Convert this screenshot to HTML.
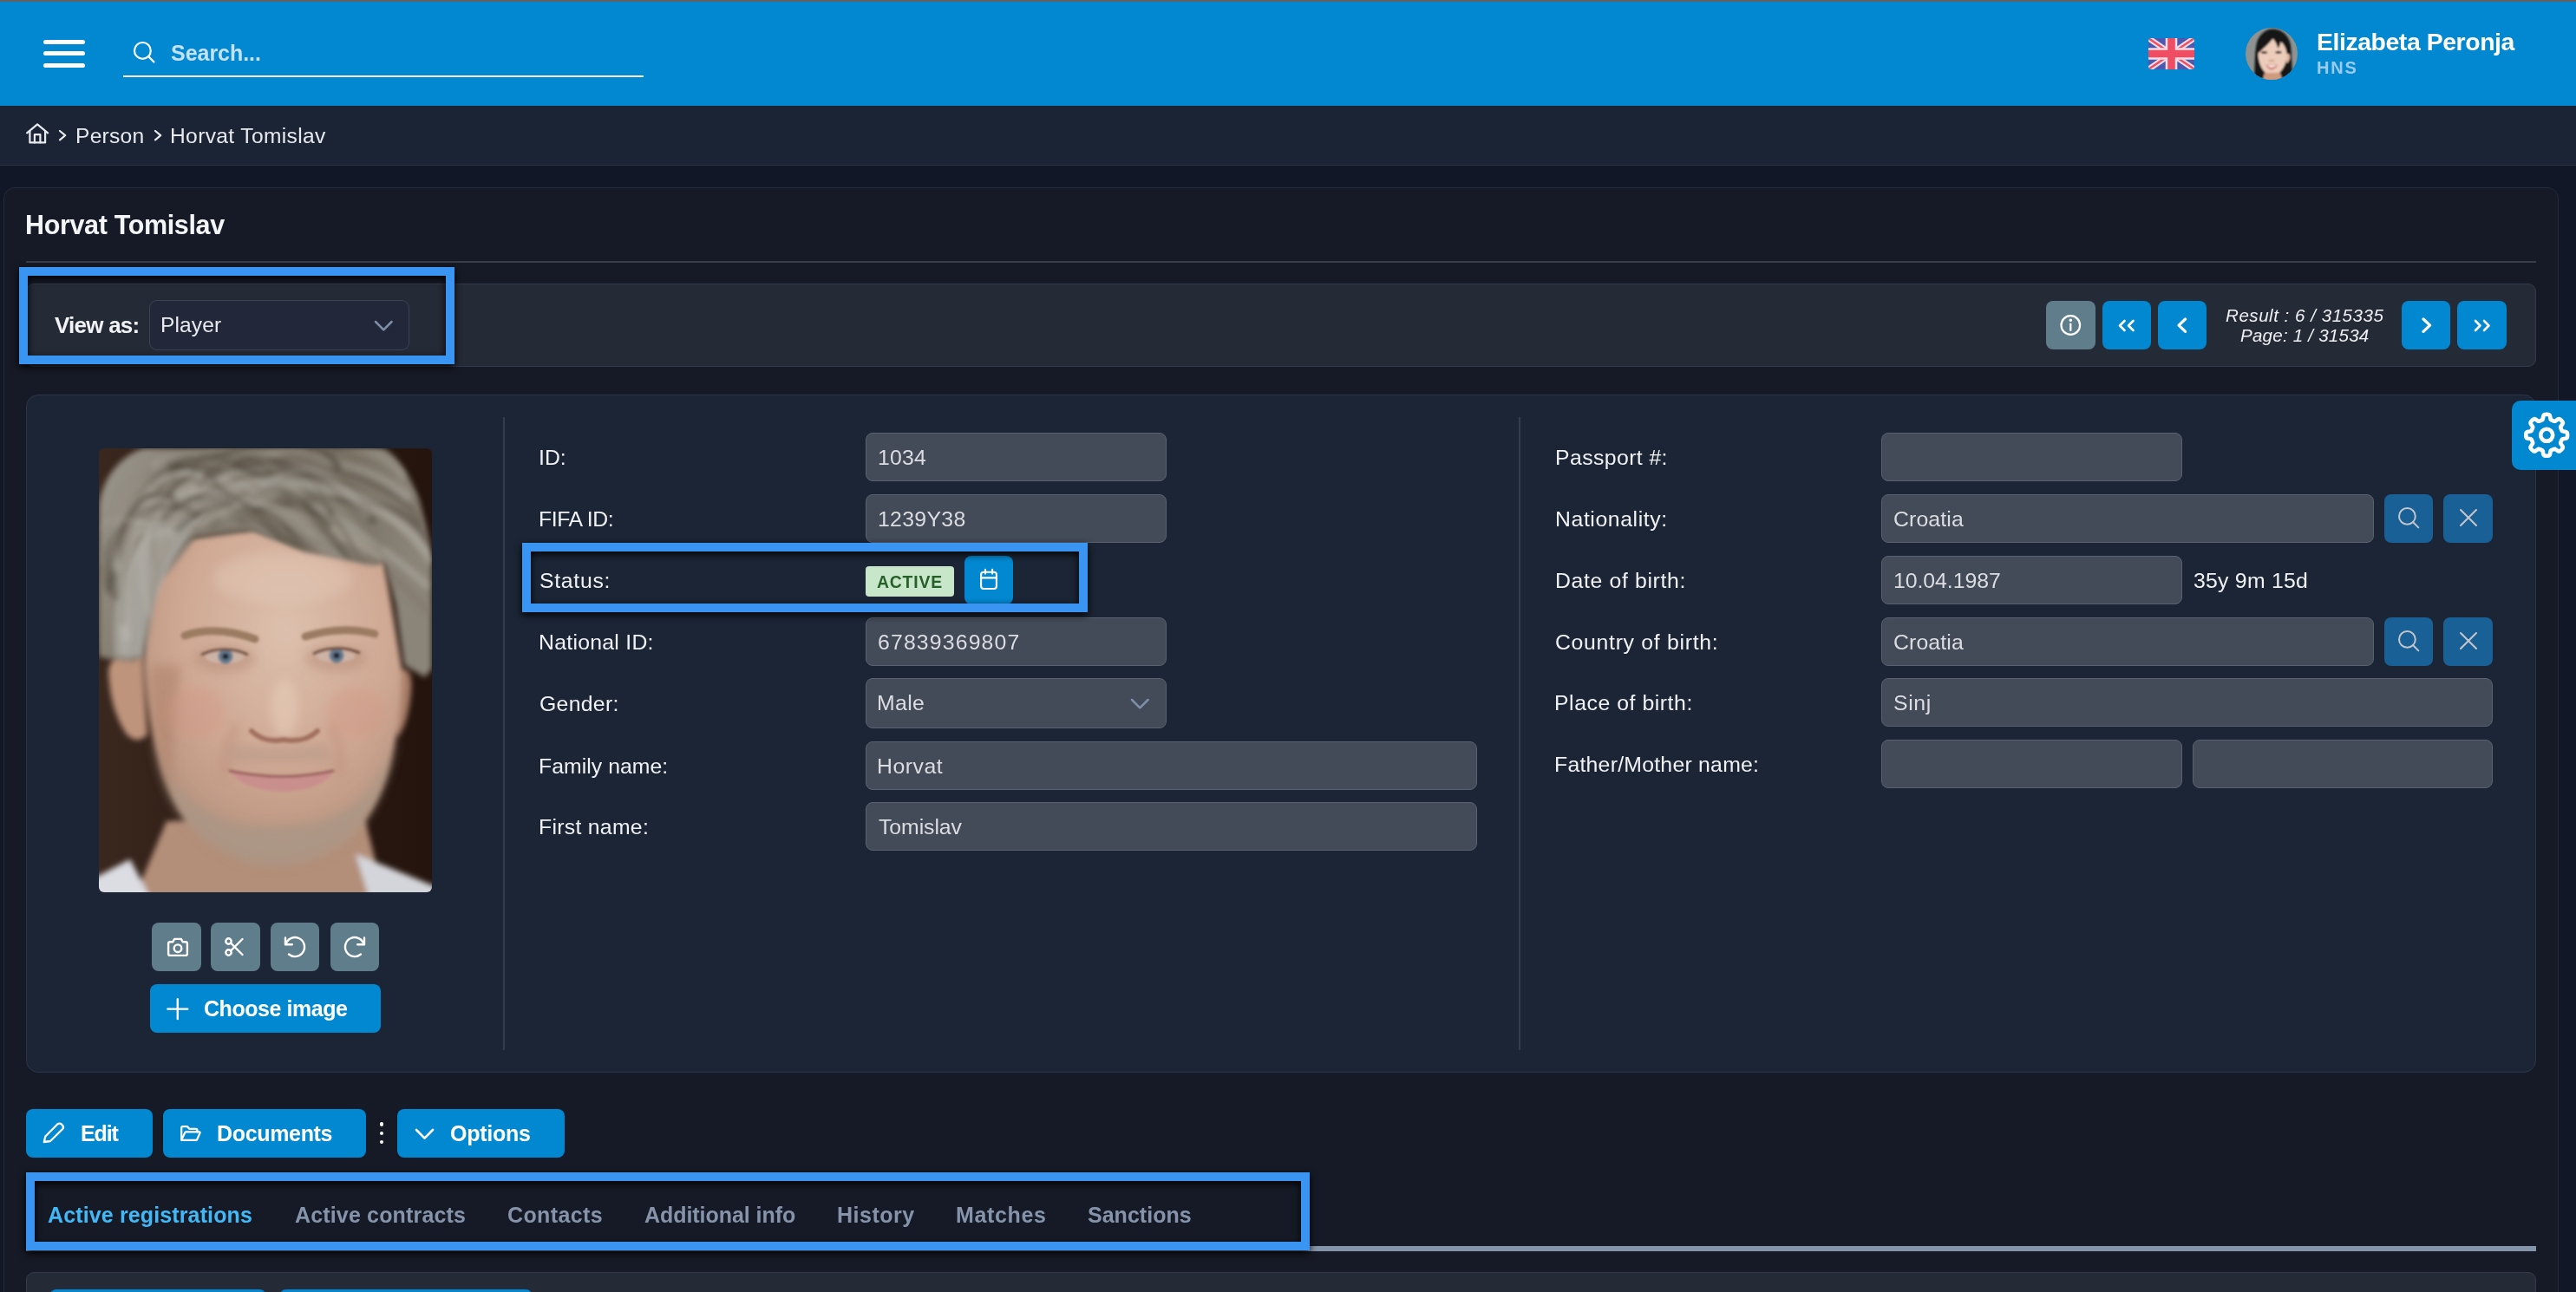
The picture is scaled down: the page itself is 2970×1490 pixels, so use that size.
<!DOCTYPE html>
<html><head><meta charset="utf-8"><title>Horvat Tomislav</title>
<style>
html,body{margin:0;padding:0;background:#111726;}
body{width:2970px;height:1490px;overflow:hidden;position:relative;font-family:"Liberation Sans", sans-serif;}
.b{position:absolute;box-sizing:border-box;}
.t{position:absolute;white-space:pre;font-family:"Liberation Sans", sans-serif;will-change:transform;}
</style></head><body>
<div class="b" style="left:0px;top:0px;width:2970px;height:2px;background:linear-gradient(#5f6165,#675f5e);"></div>
<div class="b" style="left:0px;top:2px;width:2970px;height:120px;background:#0288d1;"></div>
<div class="b" style="left:50px;top:45.5px;width:48px;height:5.200000000000003px;background:#fff;border-radius:2.6px;"></div>
<div class="b" style="left:50px;top:59.3px;width:48px;height:5.200000000000003px;background:#fff;border-radius:2.6px;"></div>
<div class="b" style="left:50px;top:73.1px;width:48px;height:5.200000000000003px;background:#fff;border-radius:2.6px;"></div>
<svg class="b" style="left:151.0px;top:44.6px" width="30.400000000000006" height="30.4" viewBox="151.0 44.6 30.400000000000006 30.4" fill="none" stroke="#fff" stroke-width="2.2" stroke-linecap="round"><circle cx="164.4" cy="58.0" r="9.4"/><path d="M171.05 64.65 L177.4 71.0"/></svg>
<div class="b" style="left:142px;top:86.8px;width:600px;height:2.0px;background:#fff;"></div>
<svg class="b" style="left:2476.5px;top:44px;border-radius:4px" width="53" height="36" viewBox="0 0 53 36">
<rect width="53" height="36" fill="#4b5ab0"/>
<path d="M0 0 L53 36 M53 0 L0 36" stroke="#efdbe4" stroke-width="6.6"/>
<path d="M0 0 L53 36 M53 0 L0 36" stroke="#ee4d63" stroke-width="2.4"/>
<path d="M26.5 0 V36 M0 18 H53" stroke="#f3dde4" stroke-width="13.6"/>
<path d="M26.5 0 V36 M0 18 H53" stroke="#ee4d63" stroke-width="8.6"/>
</svg>
<svg class="b" style="left:2589px;top:32px" width="60" height="60" viewBox="0 0 60 60">
<defs><clipPath id="avc"><circle cx="30" cy="30" r="30"/></clipPath><filter id="avb"><feGaussianBlur stdDeviation="0.8"/></filter></defs>
<g clip-path="url(#avc)"><rect width="60" height="60" fill="#8e9290"/>
<g filter="url(#avb)">
<path d="M10 62 C11 45 10 30 13 17 C17 5 26 1 32 1.5 C42 2 50 9 52 20 C53.5 32 53 45 55 62 Z" fill="#161515"/>
<path d="M47 30 Q51.5 29 51 35 Q50 40 47 41 Z" fill="#e2b9a4"/>
<path d="M14.5 30 C14 22 18 13 30 12.5 C42 13 47.5 22 47.5 31 C47.5 40 44 48 38 52.5 C34 55.5 28 55.5 24 52.5 C18 48 15 40 14.5 30 Z" fill="#ecccba"/>
<path d="M22 52 L40 52 L43 62 L19 62 Z" fill="#d09a7e"/>
<path d="M13 31 C13 18 20 9 31 9 C43 9 50 18 50 30 C47 25 44 19 41 14 C40 19 39 22 37.5 24 C36 19 34 15 31.5 12.5 C28 17 22 23 13 31 Z" fill="#161515"/>
<ellipse cx="21.5" cy="28.4" rx="3.6" ry="1.5" fill="#3a2a26"/>
<ellipse cx="38" cy="28.2" rx="3.6" ry="1.5" fill="#3a2a26"/>
<path d="M27 37.5 Q30 39 33 37.5" stroke="#c9957f" stroke-width="1.4" fill="none"/>
<path d="M23.3 42.8 Q30 41.6 37 42.8 Q35 48.2 30 48.4 Q25.5 48.2 23.3 42.8 Z" fill="#d47f7c"/>
<path d="M24.8 43.3 Q30 42.6 35.6 43.3 Q33.5 45.6 30 45.7 Q27 45.6 24.8 43.3 Z" fill="#f6ece6"/>
</g></g></svg>
<div class="b" style="left:0px;top:122px;width:2970px;height:69px;background:#1b2434;border:none;border-bottom:1.5px solid #2b3343;"></div>
<svg class="b" style="left:28px;top:141px" width="30" height="27" viewBox="28 141 30 27" fill="none" stroke="#e8eaed" stroke-width="2.2" stroke-linecap="round" stroke-linejoin="round">
<path d="M31.1 153.3 L43.1 143.4 L55.1 153.3"/><path d="M34.4 151.2 V164.4 H52.1 V151.2"/><path d="M39.9 164.4 V155.2 H46.4 V164.4"/></svg>
<svg class="b" style="left:66px;top:147.6px" width="12.200000000000003" height="16.400000000000006" viewBox="-3 -3 12.200000000000003 16.400000000000006" fill="none" stroke="#e8eaed" stroke-width="2.2" stroke-linecap="round" stroke-linejoin="round"><path d="M0 0 L6.200000000000003 5.200000000000003 L0 10.400000000000006"/></svg>
<svg class="b" style="left:175.5px;top:147.6px" width="12.199999999999989" height="16.400000000000006" viewBox="-3 -3 12.199999999999989 16.400000000000006" fill="none" stroke="#e8eaed" stroke-width="2.2" stroke-linecap="round" stroke-linejoin="round"><path d="M0 0 L6.199999999999989 5.200000000000003 L0 10.400000000000006"/></svg>
<div class="b" style="left:4px;top:215.5px;width:2945.5px;height:1384.5px;background:#161a26;border:1.3px solid #262b39;border-radius:13px;"></div>
<div class="b" style="left:30px;top:301.2px;width:2893.5px;height:1.8000000000000114px;background:#383d4a;"></div>
<div class="b" style="left:30px;top:327px;width:2894px;height:95.5px;background:#252a37;border:1.3px solid #343a49;border-radius:9px;"></div>
<div class="b" style="left:172px;top:346px;width:300px;height:58px;background:#222839;border:1.3px solid #3b4253;border-radius:9px;"></div>
<svg class="b" style="left:430.2px;top:367.90000000000003px" width="24.6" height="15.4" viewBox="-3 -3 24.6 15.4" fill="none" stroke="#7d8fa8" stroke-width="2.5" stroke-linecap="round" stroke-linejoin="round"><path d="M0 0 L9.3 9.4 L18.6 0"/></svg>
<div class="b" style="left:2359px;top:347px;width:57px;height:56px;background:#607d8b;border-radius:8px;"></div>
<svg class="b" style="left:2371px;top:359px" width="32" height="32" viewBox="0 0 32 32" fill="none" stroke="#fff" stroke-width="2.2" stroke-linecap="round"><circle cx="16.3" cy="16" r="10.8"/><path d="M16.3 14.5 V22"/><circle cx="16.3" cy="10.2" r="0.7" fill="#fff"/></svg>
<div class="b" style="left:2423.7px;top:347px;width:56.30000000000018px;height:56px;background:#0288d1;border-radius:8px;"></div>
<div class="b" style="left:2488px;top:347px;width:56.30000000000018px;height:56px;background:#0288d1;border-radius:8px;"></div>
<div class="b" style="left:2769px;top:347px;width:56.30000000000018px;height:56px;background:#0288d1;border-radius:8px;"></div>
<div class="b" style="left:2833.3px;top:347px;width:56.30000000000018px;height:56px;background:#0288d1;border-radius:8px;"></div>
<svg class="b" style="left:2441px;top:366.5px" width="11.5" height="17.0" viewBox="-3 -3 11.5 17.0" fill="none" stroke="#fff" stroke-width="2.6" stroke-linecap="round" stroke-linejoin="round"><path d="M5.5 0 L0 5.5 L5.5 11.0"/></svg>
<svg class="b" style="left:2450.5px;top:366.5px" width="11.5" height="17.0" viewBox="-3 -3 11.5 17.0" fill="none" stroke="#fff" stroke-width="2.6" stroke-linecap="round" stroke-linejoin="round"><path d="M5.5 0 L0 5.5 L5.5 11.0"/></svg>
<svg class="b" style="left:2509px;top:365px" width="13.599999999999909" height="20.399999999999977" viewBox="-3 -3 13.599999999999909 20.399999999999977" fill="none" stroke="#fff" stroke-width="3.2" stroke-linecap="round" stroke-linejoin="round"><path d="M7.599999999999909 0 L0 7.199999999999989 L7.599999999999909 14.399999999999977"/></svg>
<svg class="b" style="left:2791px;top:365px" width="13.599999999999909" height="20.399999999999977" viewBox="-3 -3 13.599999999999909 20.399999999999977" fill="none" stroke="#fff" stroke-width="3.2" stroke-linecap="round" stroke-linejoin="round"><path d="M0 0 L7.599999999999909 7.199999999999989 L0 14.399999999999977"/></svg>
<svg class="b" style="left:2851px;top:366.5px" width="11.5" height="17.0" viewBox="-3 -3 11.5 17.0" fill="none" stroke="#fff" stroke-width="2.6" stroke-linecap="round" stroke-linejoin="round"><path d="M0 0 L5.5 5.5 L0 11.0"/></svg>
<svg class="b" style="left:2860.5px;top:366.5px" width="11.5" height="17.0" viewBox="-3 -3 11.5 17.0" fill="none" stroke="#fff" stroke-width="2.6" stroke-linecap="round" stroke-linejoin="round"><path d="M0 0 L5.5 5.5 L0 11.0"/></svg>
<div class="b" style="left:30px;top:455px;width:2894px;height:781.5px;background:#1b2535;border:1.3px solid #2c3648;border-radius:14px;"></div>
<svg class="b" style="left:114px;top:517px;border-radius:6px" width="384" height="512" viewBox="0 0 384 512">
<defs>
<filter id="bl6" x="-20%" y="-20%" width="140%" height="140%"><feGaussianBlur stdDeviation="6"/></filter>
<filter id="bl3" x="-20%" y="-20%" width="140%" height="140%"><feGaussianBlur stdDeviation="3"/></filter>
<filter id="bl15" x="-20%" y="-20%" width="140%" height="140%"><feGaussianBlur stdDeviation="1.5"/></filter>
<linearGradient id="bgp" x1="0" y1="0" x2="1" y2="0"><stop offset="0" stop-color="#3a271e"/><stop offset="0.5" stop-color="#2c1b13"/><stop offset="1" stop-color="#24140d"/></linearGradient>
<radialGradient id="skin" cx="0.55" cy="0.3" r="0.75"><stop offset="0" stop-color="#dcc0ad"/><stop offset="0.55" stop-color="#cfa893"/><stop offset="1" stop-color="#b08c78"/></radialGradient>
<linearGradient id="hairg" x1="0" y1="0" x2="1" y2="0.3"><stop offset="0" stop-color="#9c988f"/><stop offset="0.35" stop-color="#81796d"/><stop offset="0.7" stop-color="#776f62"/><stop offset="1" stop-color="#8b8478"/></linearGradient>
<mask id="hm"><g filter="url(#bl3)"><path d="M0 67 C4 30 30 6 52 0 L329 0 C362 20 378 80 384 131 L384 254 L376 264 L352 250 L342 180 L329 131 L317 135 L238 119 L178 95 L111 103 L67 160 L52 240 L40 246 L12 243 L0 240 Z" fill="#fff"/></g></mask></defs>
<rect width="384" height="512" fill="url(#bgp)"/>
<g filter="url(#bl3)">
<path d="M78 430 L40 520 L330 520 L306 425 Z" fill="#b38e78"/>
<path d="M-10 498 L36 474 L60 520 L-10 520 Z" fill="#dcdde2"/>
<path d="M296 468 L326 480 L394 508 L394 520 L312 520 Z" fill="#d4d5da"/>
<path d="M50 238 Q20 225 11 255 Q12 300 32 330 Q45 342 56 330 Z" fill="#bf947d"/>
<path d="M345 256 Q362 248 360 280 Q356 320 344 334 Z" fill="#a97e68"/>
<path d="M52 238 C50 160 80 110 111 103 L178 93 L238 115 L329 131 L349 250 C349 320 338 385 306 430 C282 466 235 484 202 482 C165 482 122 462 100 428 C70 385 56 320 52 238 Z" fill="url(#skin)"/>
</g>
<g filter="url(#bl6)">
<path d="M62 330 Q75 410 110 440 Q150 480 200 482 Q250 482 290 448 Q330 410 344 330 Q320 400 280 420 Q250 436 200 436 Q150 436 118 415 Q80 390 62 330 Z" fill="#a99686" opacity="0.8"/>
<path d="M150 340 Q200 350 262 340 L270 362 L150 362 Z" fill="#b89a8a" opacity="0.6"/>
<path d="M60 250 Q55 330 85 400 Q85 320 95 250 Z" fill="#b0846d" opacity="0.6"/>
</g>
<g filter="url(#bl3)">
<path d="M0 67 C4 30 30 6 52 0 L329 0 C362 20 378 80 384 131 L384 254 L376 264 L352 250 L342 180 L329 131 L317 135 L238 119 L178 95 L111 103 L67 160 L52 240 L40 246 L12 243 L0 240 Z" fill="url(#hairg)"/>
<path d="M30 150 Q60 60 150 50 Q100 90 70 160 Q55 200 50 240 L20 240 Q15 190 30 150 Z" fill="#aeaca6" opacity="0.8"/>
<path d="M120 20 Q220 -5 320 60 Q260 30 200 40 Q150 45 110 80 Z" fill="#5a5146" opacity="0.75"/>
<path d="M200 70 Q280 70 340 140 Q300 110 240 100 Z" fill="#a39b8d" opacity="0.8"/>
</g>
<g mask="url(#hm)"><g filter="url(#bl3)" fill="none" stroke-linecap="round"><path d="M101 60 C161 10 353 56 384 127" stroke="#a29d93" stroke-width="5.7" opacity="0.38"/><path d="M68 80 C157 12 291 -47 351 30" stroke="#a29d93" stroke-width="9.4" opacity="0.51"/><path d="M66 18 C142 -18 322 106 378 158" stroke="#b8b5ad" stroke-width="9.5" opacity="0.42"/><path d="M120 52 C209 -10 228 191 290 249" stroke="#b8b5ad" stroke-width="8.6" opacity="0.31"/><path d="M111 24 C145 3 205 34 266 87" stroke="#574e43" stroke-width="8.3" opacity="0.55"/><path d="M96 21 C142 -4 301 101 341 199" stroke="#7d7568" stroke-width="5.9" opacity="0.48"/><path d="M61 52 C102 7 241 91 321 177" stroke="#979084" stroke-width="9.5" opacity="0.33"/><path d="M98 32 C176 -3 216 191 289 243" stroke="#979084" stroke-width="12.0" opacity="0.45"/><path d="M112 18 C143 -32 201 58 271 122" stroke="#7d7568" stroke-width="5.6" opacity="0.45"/><path d="M82 63 C169 19 249 32 304 124" stroke="#a29d93" stroke-width="9.4" opacity="0.38"/><path d="M81 64 C148 16 294 -7 355 56" stroke="#c2bfb8" stroke-width="9.2" opacity="0.41"/><path d="M69 18 C142 -15 320 -1 390 75" stroke="#8a8377" stroke-width="8.6" opacity="0.53"/><path d="M148 25 C215 1 287 75 319 170" stroke="#574e43" stroke-width="5.5" opacity="0.40"/><path d="M82 19 C171 -6 263 75 291 142" stroke="#4a4238" stroke-width="9.6" opacity="0.47"/><path d="M113 26 C197 -29 177 -17 255 24" stroke="#7d7568" stroke-width="8.4" opacity="0.48"/><path d="M89 95 C163 30 197 63 261 146" stroke="#4a4238" stroke-width="7.5" opacity="0.47"/><path d="M141 85 C223 36 253 139 310 202" stroke="#574e43" stroke-width="9.3" opacity="0.32"/><path d="M118 94 C171 38 323 121 378 187" stroke="#7d7568" stroke-width="8.6" opacity="0.43"/><path d="M88 22 C125 -37 194 171 253 240" stroke="#574e43" stroke-width="7.6" opacity="0.34"/><path d="M115 56 C201 12 325 34 359 99" stroke="#8a8377" stroke-width="6.4" opacity="0.41"/><path d="M133 88 C198 52 349 39 378 108" stroke="#574e43" stroke-width="10.0" opacity="0.54"/><path d="M85 29 C128 -12 258 14 315 83" stroke="#4a4238" stroke-width="10.0" opacity="0.51"/><path d="M116 41 C183 -13 333 23 370 84" stroke="#574e43" stroke-width="9.5" opacity="0.40"/><path d="M77 77 C155 7 262 153 289 199" stroke="#4a4238" stroke-width="11.7" opacity="0.47"/><path d="M78 53 C136 -3 245 -34 276 22" stroke="#4a4238" stroke-width="8.8" opacity="0.54"/><path d="M105 95 C177 64 228 122 273 215" stroke="#979084" stroke-width="5.9" opacity="0.41"/><path d="M116 88 C199 28 228 83 305 151" stroke="#b8b5ad" stroke-width="5.7" opacity="0.52"/><path d="M132 89 C185 65 229 -23 268 76" stroke="#4a4238" stroke-width="6.8" opacity="0.48"/><path d="M61 55 C117 22 180 46 255 99" stroke="#7d7568" stroke-width="8.0" opacity="0.31"/><path d="M108 70 C198 5 332 48 383 128" stroke="#c2bfb8" stroke-width="11.6" opacity="0.42"/><path d="M145 22 C193 -35 224 70 282 141" stroke="#8a8377" stroke-width="7.2" opacity="0.40"/><path d="M136 87 C224 41 226 164 280 216" stroke="#7d7568" stroke-width="8.5" opacity="0.45"/><path d="M62 93 C141 44 275 31 325 112" stroke="#7d7568" stroke-width="11.5" opacity="0.41"/><path d="M143 79 C202 42 235 -19 309 77" stroke="#c2bfb8" stroke-width="8.7" opacity="0.33"/><path d="M98 17 C186 -4 258 141 288 181" stroke="#8a8377" stroke-width="7.3" opacity="0.39"/><path d="M116 23 C176 -9 324 -24 356 48" stroke="#979084" stroke-width="5.2" opacity="0.46"/><path d="M134 64 C196 33 295 146 328 219" stroke="#a29d93" stroke-width="6.6" opacity="0.49"/><path d="M133 87 C218 56 216 -1 296 92" stroke="#a29d93" stroke-width="11.2" opacity="0.33"/><path d="M68 46 C131 -9 281 159 313 236" stroke="#574e43" stroke-width="5.7" opacity="0.44"/><path d="M92 81 C160 44 222 92 302 182" stroke="#7d7568" stroke-width="8.4" opacity="0.31"/><path d="M113 69 C86 66 58 135 63 183" stroke="#979084" stroke-width="10.6" opacity="0.32"/><path d="M64 96 C31 82 14 158 30 219" stroke="#c2bfb8" stroke-width="5.1" opacity="0.48"/><path d="M119 35 C83 29 24 150 29 216" stroke="#a29d93" stroke-width="6.9" opacity="0.32"/><path d="M119 90 C76 84 46 185 63 242" stroke="#979084" stroke-width="6.7" opacity="0.33"/><path d="M112 33 C79 17 54 76 65 137" stroke="#8a8377" stroke-width="7.4" opacity="0.48"/><path d="M65 47 C31 28 11 70 30 121" stroke="#979084" stroke-width="7.0" opacity="0.46"/><path d="M100 63 C54 42 1 161 24 250" stroke="#a29d93" stroke-width="5.7" opacity="0.33"/><path d="M77 55 C31 55 25 165 33 219" stroke="#c2bfb8" stroke-width="8.3" opacity="0.43"/><path d="M128 65 C75 63 52 125 70 203" stroke="#a29d93" stroke-width="7.3" opacity="0.53"/><path d="M87 98 C43 85 44 136 59 190" stroke="#b8b5ad" stroke-width="8.6" opacity="0.39"/><path d="M80 72 C31 64 37 105 37 157" stroke="#a29d93" stroke-width="8.8" opacity="0.40"/><path d="M108 24 C65 3 9 92 19 172" stroke="#4a4238" stroke-width="7.6" opacity="0.42"/><path d="M128 39 C79 25 5 161 34 242" stroke="#b8b5ad" stroke-width="5.3" opacity="0.40"/><path d="M68 89 C34 85 9 70 22 140" stroke="#b8b5ad" stroke-width="7.2" opacity="0.49"/><path d="M117 31 C78 16 8 71 17 137" stroke="#c2bfb8" stroke-width="6.6" opacity="0.45"/><path d="M111 76 C81 47 -6 84 9 156" stroke="#4a4238" stroke-width="10.3" opacity="0.31"/><path d="M64 42 C40 25 25 157 27 201" stroke="#8a8377" stroke-width="8.3" opacity="0.46"/><path d="M86 58 C36 33 9 119 11 165" stroke="#4a4238" stroke-width="7.7" opacity="0.49"/><path d="M87 32 C43 23 -16 147 7 229" stroke="#8a8377" stroke-width="7.6" opacity="0.39"/><path d="M67 90 C24 75 -20 76 1 131" stroke="#a29d93" stroke-width="5.5" opacity="0.35"/></g></g>
<g filter="url(#bl6)">
<ellipse cx="112" cy="305" rx="34" ry="30" fill="#d19585" opacity="0.35"/>
<ellipse cx="296" cy="305" rx="34" ry="30" fill="#d19585" opacity="0.35"/>
<ellipse cx="145" cy="243" rx="36" ry="16" fill="#b48873" opacity="0.45"/>
<ellipse cx="273" cy="242" rx="36" ry="16" fill="#b48873" opacity="0.45"/>
<ellipse cx="214" cy="300" rx="16" ry="34" fill="#e6cbb9" opacity="0.6"/>
<path d="M160 318 Q140 350 146 378" stroke="#b58672" stroke-width="7" fill="none" opacity="0.5"/>
<path d="M266 318 Q284 350 276 378" stroke="#b58672" stroke-width="7" fill="none" opacity="0.5"/>
<ellipse cx="212" cy="150" rx="80" ry="30" fill="#e2c8b6" opacity="0.5"/>
</g>
<g filter="url(#bl15)">
<path d="M99 216 Q135 204 180 220" stroke="#9b7b62" stroke-width="9" fill="none" stroke-linecap="round"/>
<path d="M238 217 Q280 204 318 214" stroke="#9b7b62" stroke-width="9" fill="none" stroke-linecap="round"/>
<ellipse cx="145" cy="241" rx="22" ry="7" fill="#cdb3a6"/>
<ellipse cx="273" cy="240" rx="22" ry="7" fill="#cdb3a6"/>
<circle cx="146" cy="240" r="8.5" fill="#62788e"/>
<circle cx="274" cy="239" r="8.5" fill="#62788e"/>
<circle cx="146" cy="240" r="3.6" fill="#23232a"/>
<circle cx="274" cy="239" r="3.6" fill="#23232a"/>
<path d="M118 238 Q145 226 172 238" stroke="#6d4e3f" stroke-width="3" fill="none"/>
<path d="M247 237 Q274 225 301 236" stroke="#6d4e3f" stroke-width="3" fill="none"/>
<path d="M176 326 Q190 340 213 336 Q238 340 252 326" stroke="#a1705f" stroke-width="6" fill="none" stroke-linecap="round"/>
<path d="M151 372 Q212 388 270 372 Q260 394 212 396 Q165 394 151 372 Z" fill="#c98f8c"/>
<path d="M151 372 Q212 385 270 372" stroke="#9a625d" stroke-width="3" fill="none" stroke-linecap="round"/>
</g>
</svg>
<div class="b" style="left:175px;top:1064px;width:56.599999999999994px;height:56px;background:#607d8b;border-radius:8px;"></div>
<div class="b" style="left:243.2px;top:1064px;width:56.60000000000002px;height:56px;background:#607d8b;border-radius:8px;"></div>
<div class="b" style="left:311.8px;top:1064px;width:56.60000000000002px;height:56px;background:#607d8b;border-radius:8px;"></div>
<div class="b" style="left:380.6px;top:1064px;width:56.60000000000002px;height:56px;background:#607d8b;border-radius:8px;"></div>
<svg class="b" style="left:187px;top:1078px" width="32" height="28" viewBox="187 1078 32 28" fill="none" stroke="#fff" stroke-width="2.4" stroke-linecap="round" stroke-linejoin="round"><path d="M196 1086.2 H199.3 L201.2 1082.9 H208.8 L210.7 1086.2 H214 Q215.9 1086.2 215.9 1088 V1100 Q215.9 1101.9 214 1101.9 H196 Q194.1 1101.9 194.1 1100 V1088 Q194.1 1086.2 196 1086.2 Z"/><circle cx="205" cy="1093.7" r="4.3"/></svg>
<svg class="b" style="left:255px;top:1078px" width="32" height="28" viewBox="255 1078 32 28" fill="none" stroke="#fff" stroke-width="2.4" stroke-linecap="round" stroke-linejoin="round"><circle cx="263.5" cy="1085.5" r="3.2"/><circle cx="263.5" cy="1098.5" r="3.2"/><path d="M266 1087.5 L279.5 1101 M266 1096.5 L279.5 1083"/></svg>
<svg class="b" style="left:324px;top:1076px" width="34" height="32" viewBox="324 1076 34 32" fill="none" stroke="#fff" stroke-width="2.4" stroke-linecap="round" stroke-linejoin="round"><path d="M329.5 1089 A11 11 0 1 1 333 1100.5"/><path d="M329 1081.5 V1089.3 H336.8"/></svg>
<svg class="b" style="left:392px;top:1076px" width="34" height="32" viewBox="392 1076 34 32" fill="none" stroke="#fff" stroke-width="2.4" stroke-linecap="round" stroke-linejoin="round"><path d="M419.5 1089 A11 11 0 1 0 416 1100.5"/><path d="M420 1081.5 V1089.3 H412.2"/></svg>
<div class="b" style="left:173px;top:1135px;width:266px;height:56px;background:#0288d1;border-radius:8px;"></div>
<svg class="b" style="left:190px;top:1150px" width="30" height="28" viewBox="190 1150 30 28" fill="none" stroke="#fff" stroke-width="2.4" stroke-linecap="round"><path d="M193.3 1163.6 H216.3 M204.8 1152.3 V1175"/></svg>
<div class="b" style="left:580.3px;top:481px;width:1.400000000000091px;height:730px;background:#353d4d;"></div>
<div class="b" style="left:1751.3px;top:481px;width:1.400000000000091px;height:730px;background:#353d4d;"></div>
<div class="b" style="left:998px;top:499px;width:347px;height:56px;background:#434a58;border:1.4px solid #5a6170;border-radius:8px;"></div>
<div class="b" style="left:998px;top:570px;width:347px;height:56px;background:#434a58;border:1.4px solid #5a6170;border-radius:8px;"></div>
<div class="b" style="left:998px;top:712px;width:347px;height:56px;background:#434a58;border:1.4px solid #5a6170;border-radius:8px;"></div>
<div class="b" style="left:998px;top:782px;width:347px;height:58px;background:#434a58;border:1.4px solid #5a6170;border-radius:8px;"></div>
<svg class="b" style="left:1302.3px;top:803.9px" width="24.6" height="15.4" viewBox="-3 -3 24.6 15.4" fill="none" stroke="#7d8fa8" stroke-width="2.5" stroke-linecap="round" stroke-linejoin="round"><path d="M0 0 L9.3 9.4 L18.6 0"/></svg>
<div class="b" style="left:998px;top:855.2px;width:705px;height:55.799999999999955px;background:#434a58;border:1.4px solid #5a6170;border-radius:8px;"></div>
<div class="b" style="left:998px;top:925.3px;width:705px;height:55.700000000000045px;background:#434a58;border:1.4px solid #5a6170;border-radius:8px;"></div>
<div class="b" style="left:998px;top:653px;width:102px;height:35px;background:#c8e6c9;border-radius:4px;"></div>
<div class="b" style="left:1112px;top:641px;width:56.299999999999955px;height:56px;background:#0288d1;border-radius:8px;"></div>
<svg class="b" style="left:1126px;top:653px" width="28" height="30" viewBox="1126 653 28 30" fill="none" stroke="#fff" stroke-width="2.1" stroke-linecap="round" stroke-linejoin="round"><rect x="1131.1" y="659.8" width="17.8" height="19.2" rx="3"/><path d="M1131.1 666.4 H1148.9 M1136 656.8 V661.6 M1144.1 656.8 V661.6"/></svg>
<div class="b" style="left:2169px;top:498.8px;width:347px;height:55.99999999999994px;background:#434a58;border:1.4px solid #5a6170;border-radius:8px;"></div>
<div class="b" style="left:2169px;top:569.7px;width:568px;height:56.0px;background:#434a58;border:1.4px solid #5a6170;border-radius:8px;"></div>
<div class="b" style="left:2169px;top:640.6px;width:347px;height:56.0px;background:#434a58;border:1.4px solid #5a6170;border-radius:8px;"></div>
<div class="b" style="left:2169px;top:711.6px;width:568px;height:56.0px;background:#434a58;border:1.4px solid #5a6170;border-radius:8px;"></div>
<div class="b" style="left:2169px;top:782.2px;width:705px;height:55.799999999999955px;background:#434a58;border:1.4px solid #5a6170;border-radius:8px;"></div>
<div class="b" style="left:2169px;top:853px;width:347px;height:56px;background:#434a58;border:1.4px solid #5a6170;border-radius:8px;"></div>
<div class="b" style="left:2528px;top:853px;width:346px;height:56px;background:#434a58;border:1.4px solid #5a6170;border-radius:8px;"></div>
<div class="b" style="left:2749px;top:569.7px;width:56px;height:56.0px;background:#186096;border-radius:8px;"></div>
<div class="b" style="left:2817px;top:569.7px;width:57px;height:56.0px;background:#186096;border-radius:8px;"></div>
<svg class="b" style="left:2762.1px;top:582.3000000000001px" width="30.300000000000182" height="30.399999999999977" viewBox="2762.1 582.3000000000001 30.300000000000182 30.399999999999977" fill="none" stroke="#c3c5ca" stroke-width="2.0" stroke-linecap="round"><circle cx="2775.5" cy="595.7" r="9.4"/><path d="M2782.12 602.37 L2788.4 608.7"/></svg>
<svg class="b" style="left:2833.5px;top:585.4000000000001px" width="24" height="24" viewBox="-12 -12 24 24" fill="none" stroke="#c3c5ca" stroke-width="2.1" stroke-linecap="round"><path d="M-9 -9 L9 9 M9 -9 L-9 9"/></svg>
<div class="b" style="left:2749px;top:711.6px;width:56px;height:56.0px;background:#186096;border-radius:8px;"></div>
<div class="b" style="left:2817px;top:711.6px;width:57px;height:56.0px;background:#186096;border-radius:8px;"></div>
<svg class="b" style="left:2762.1px;top:724.2px" width="30.300000000000182" height="30.399999999999977" viewBox="2762.1 724.2 30.300000000000182 30.399999999999977" fill="none" stroke="#c3c5ca" stroke-width="2.0" stroke-linecap="round"><circle cx="2775.5" cy="737.6" r="9.4"/><path d="M2782.12 744.27 L2788.4 750.6"/></svg>
<svg class="b" style="left:2833.5px;top:727.3000000000001px" width="24" height="24" viewBox="-12 -12 24 24" fill="none" stroke="#c3c5ca" stroke-width="2.1" stroke-linecap="round"><path d="M-9 -9 L9 9 M9 -9 L-9 9"/></svg>
<div class="b" style="left:2896px;top:462px;width:84px;height:80px;background:#0288d1;border-radius:10px;"></div>
<svg class="b" style="left:2900px;top:466px" width="70" height="72" viewBox="2900 466 70 72" fill="none" stroke="#fff" stroke-width="4.6" stroke-linecap="round" stroke-linejoin="round"><path d="M2936.20 477.90 L2936.83 477.91 L2937.45 477.95 L2938.07 478.03 L2938.68 478.17 L2939.27 478.47 L2939.79 479.13 L2940.17 480.39 L2940.40 482.02 L2940.65 483.28 L2940.98 483.96 L2941.38 484.31 L2941.81 484.53 L2942.25 484.72 L2942.69 484.90 L2943.13 485.08 L2943.56 485.26 L2944.00 485.45 L2944.44 485.62 L2944.90 485.77 L2945.44 485.80 L2946.15 485.56 L2947.21 484.84 L2948.54 483.85 L2949.69 483.23 L2950.52 483.13 L2951.15 483.34 L2951.69 483.67 L2952.18 484.05 L2952.65 484.47 L2953.10 484.90 L2953.53 485.35 L2953.95 485.82 L2954.33 486.31 L2954.66 486.85 L2954.87 487.48 L2954.77 488.31 L2954.15 489.46 L2953.16 490.79 L2952.44 491.85 L2952.20 492.56 L2952.23 493.10 L2952.38 493.56 L2952.55 494.00 L2952.74 494.44 L2952.92 494.87 L2953.10 495.31 L2953.28 495.75 L2953.47 496.19 L2953.69 496.62 L2954.04 497.02 L2954.72 497.35 L2955.98 497.60 L2957.61 497.83 L2958.87 498.21 L2959.53 498.73 L2959.83 499.32 L2959.97 499.93 L2960.05 500.55 L2960.09 501.17 L2960.10 501.80 L2960.09 502.43 L2960.05 503.05 L2959.97 503.67 L2959.83 504.28 L2959.53 504.87 L2958.87 505.39 L2957.61 505.77 L2955.98 506.00 L2954.72 506.25 L2954.04 506.58 L2953.69 506.98 L2953.47 507.41 L2953.28 507.85 L2953.10 508.29 L2952.92 508.73 L2952.74 509.16 L2952.55 509.60 L2952.38 510.04 L2952.23 510.50 L2952.20 511.04 L2952.44 511.75 L2953.16 512.81 L2954.15 514.14 L2954.77 515.29 L2954.87 516.12 L2954.66 516.75 L2954.33 517.29 L2953.95 517.78 L2953.53 518.25 L2953.10 518.70 L2952.65 519.13 L2952.18 519.55 L2951.69 519.93 L2951.15 520.26 L2950.52 520.47 L2949.69 520.37 L2948.54 519.75 L2947.21 518.76 L2946.15 518.04 L2945.44 517.80 L2944.90 517.83 L2944.44 517.98 L2944.00 518.15 L2943.56 518.34 L2943.13 518.52 L2942.69 518.70 L2942.25 518.88 L2941.81 519.07 L2941.38 519.29 L2940.98 519.64 L2940.65 520.32 L2940.40 521.58 L2940.17 523.21 L2939.79 524.47 L2939.27 525.13 L2938.68 525.43 L2938.07 525.57 L2937.45 525.65 L2936.83 525.69 L2936.20 525.70 L2935.57 525.69 L2934.95 525.65 L2934.33 525.57 L2933.72 525.43 L2933.13 525.13 L2932.61 524.47 L2932.23 523.21 L2932.00 521.58 L2931.75 520.32 L2931.42 519.64 L2931.02 519.29 L2930.59 519.07 L2930.15 518.88 L2929.71 518.70 L2929.27 518.52 L2928.84 518.34 L2928.40 518.15 L2927.96 517.98 L2927.50 517.83 L2926.96 517.80 L2926.25 518.04 L2925.19 518.76 L2923.86 519.75 L2922.71 520.37 L2921.88 520.47 L2921.25 520.26 L2920.71 519.93 L2920.22 519.55 L2919.75 519.13 L2919.30 518.70 L2918.87 518.25 L2918.45 517.78 L2918.07 517.29 L2917.74 516.75 L2917.53 516.12 L2917.63 515.29 L2918.25 514.14 L2919.24 512.81 L2919.96 511.75 L2920.20 511.04 L2920.17 510.50 L2920.02 510.04 L2919.85 509.60 L2919.66 509.16 L2919.48 508.73 L2919.30 508.29 L2919.12 507.85 L2918.93 507.41 L2918.71 506.98 L2918.36 506.58 L2917.68 506.25 L2916.42 506.00 L2914.79 505.77 L2913.53 505.39 L2912.87 504.87 L2912.57 504.28 L2912.43 503.67 L2912.35 503.05 L2912.31 502.43 L2912.30 501.80 L2912.31 501.17 L2912.35 500.55 L2912.43 499.93 L2912.57 499.32 L2912.87 498.73 L2913.53 498.21 L2914.79 497.83 L2916.42 497.60 L2917.68 497.35 L2918.36 497.02 L2918.71 496.62 L2918.93 496.19 L2919.12 495.75 L2919.30 495.31 L2919.48 494.87 L2919.66 494.44 L2919.85 494.00 L2920.02 493.56 L2920.17 493.10 L2920.20 492.56 L2919.96 491.85 L2919.24 490.79 L2918.25 489.46 L2917.63 488.31 L2917.53 487.48 L2917.74 486.85 L2918.07 486.31 L2918.45 485.82 L2918.87 485.35 L2919.30 484.90 L2919.75 484.47 L2920.22 484.05 L2920.71 483.67 L2921.25 483.34 L2921.88 483.13 L2922.71 483.23 L2923.86 483.85 L2925.19 484.84 L2926.25 485.56 L2926.96 485.80 L2927.50 485.77 L2927.96 485.62 L2928.40 485.45 L2928.84 485.26 L2929.27 485.08 L2929.71 484.90 L2930.15 484.72 L2930.59 484.53 L2931.02 484.31 L2931.42 483.96 L2931.75 483.28 L2932.00 482.02 L2932.23 480.39 L2932.61 479.13 L2933.13 478.47 L2933.72 478.17 L2934.33 478.03 L2934.95 477.95 L2935.57 477.91 Z"/><circle cx="2936.2" cy="501.8" r="7"/></svg>
<div class="b" style="left:30px;top:1279px;width:146px;height:56px;background:#0288d1;border-radius:8px;"></div>
<div class="b" style="left:188px;top:1279px;width:234px;height:56px;background:#0288d1;border-radius:8px;"></div>
<div class="b" style="left:458px;top:1279px;width:193px;height:56px;background:#0288d1;border-radius:8px;"></div>
<svg class="b" style="left:46px;top:1291px" width="32" height="32" viewBox="46 1291 32 32" fill="none" stroke="#fff" stroke-width="2.3" stroke-linecap="round" stroke-linejoin="round"><path d="M50.8 1317 L52.3 1310.5 L66.5 1296.3 Q68.7 1294.8 70.8 1296.5 L72.2 1298 Q73.8 1300 72.2 1302 L58 1316 Z"/></svg>
<svg class="b" style="left:205px;top:1294px" width="30" height="26" viewBox="205 1294 30 26" fill="none" stroke="#fff" stroke-width="2.2" stroke-linecap="round" stroke-linejoin="round"><path d="M209.2 1314.5 V1300.6 Q209.2 1299.2 210.6 1299.2 H216 L218.2 1301.8 H226 Q227.4 1301.8 227.4 1303.2 V1305.3"/><path d="M209.2 1314.8 L213.3 1306 Q213.7 1305.3 214.5 1305.3 H229.6 Q231 1305.3 230.5 1306.6 L227.3 1314 Q227 1314.8 226 1314.8 Z"/></svg>
<svg class="b" style="left:477.2px;top:1300.0px" width="25" height="15.6" viewBox="-3 -3 25 15.6" fill="none" stroke="#fff" stroke-width="2.7" stroke-linecap="round" stroke-linejoin="round"><path d="M0 0 L9.5 9.6 L19 0"/></svg>
<div class="b" style="left:437.8px;top:1294.3999999999999px;width:4.399999999999977px;height:4.400000000000091px;background:#fff;border-radius:2.2px;"></div>
<div class="b" style="left:437.8px;top:1304.8px;width:4.399999999999977px;height:4.400000000000091px;background:#fff;border-radius:2.2px;"></div>
<div class="b" style="left:437.8px;top:1315.1px;width:4.399999999999977px;height:4.400000000000091px;background:#fff;border-radius:2.2px;"></div>
<div class="b" style="left:30px;top:1437px;width:2894px;height:6px;background:#8594ab;"></div>
<div class="b" style="left:30px;top:1467px;width:2894px;height:133px;background:#252a37;border:1.3px solid #343a49;border-radius:9px;"></div>
<div class="b" style="left:57px;top:1487px;width:249.5px;height:56px;background:#0288d1;border-radius:8px;"></div>
<div class="b" style="left:321.5px;top:1487px;width:292.0px;height:56px;background:#0288d1;border-radius:8px;"></div>
<div class="t" style="left:197.00px;top:49.00px;font-size:25px;line-height:25px;font-weight:bold;font-style:normal;color:#c4e1f5;letter-spacing:-0.035px">Search...</div>
<div class="t" style="left:86.60px;top:145.00px;font-size:24.6px;line-height:24.6px;font-weight:normal;font-style:normal;color:#e8eaed;letter-spacing:0.231px">Person</div>
<div class="t" style="left:196.00px;top:145.00px;font-size:24.6px;line-height:24.6px;font-weight:normal;font-style:normal;color:#e8eaed;letter-spacing:0.348px">Horvat Tomislav</div>
<div class="t" style="left:28.50px;top:244.00px;font-size:30.5px;line-height:30.5px;font-weight:bold;font-style:normal;color:#f4f5f6;letter-spacing:-0.348px">Horvat Tomislav</div>
<div class="t" style="left:62.50px;top:362.00px;font-size:26px;line-height:26px;font-weight:bold;font-style:normal;color:#f1f2f4;letter-spacing:-0.775px">View as:</div>
<div class="t" style="left:185.00px;top:363.00px;font-size:24.6px;line-height:24.6px;font-weight:normal;font-style:normal;color:#e9ebee;letter-spacing:0.096px">Player</div>
<div class="t" style="left:2671.00px;top:34.00px;font-size:28.4px;line-height:28.4px;font-weight:bold;font-style:normal;color:#ffffff;letter-spacing:-0.425px">Elizabeta Peronja</div>
<div class="t" style="left:2671.00px;top:68.00px;font-size:20px;line-height:20px;font-weight:bold;font-style:normal;color:#9ccbef;letter-spacing:1.757px">HNS</div>
<div class="t" style="left:2565.50px;top:354.00px;font-size:20.6px;line-height:20.6px;font-weight:normal;font-style:italic;color:#eef0f2;letter-spacing:0.504px">Result : 6 / 315335</div>
<div class="t" style="left:2582.70px;top:377.00px;font-size:20.6px;line-height:20.6px;font-weight:normal;font-style:italic;color:#eef0f2;letter-spacing:0.202px">Page: 1 / 31534</div>
<div class="t" style="left:621.40px;top:516.00px;font-size:24.8px;line-height:24.8px;font-weight:normal;font-style:normal;color:#f1f2f4;letter-spacing:0.002px">ID:</div>
<div class="t" style="left:621.40px;top:587.00px;font-size:24.8px;line-height:24.8px;font-weight:normal;font-style:normal;color:#f1f2f4;letter-spacing:-0.420px">FIFA ID:</div>
<div class="t" style="left:621.50px;top:658.00px;font-size:24.8px;line-height:24.8px;font-weight:normal;font-style:normal;color:#f1f2f4;letter-spacing:0.700px">Status:</div>
<div class="t" style="left:621.40px;top:729.00px;font-size:24.8px;line-height:24.8px;font-weight:normal;font-style:normal;color:#f1f2f4;letter-spacing:0.267px">National ID:</div>
<div class="t" style="left:621.50px;top:800.00px;font-size:24.8px;line-height:24.8px;font-weight:normal;font-style:normal;color:#f1f2f4;letter-spacing:0.299px">Gender:</div>
<div class="t" style="left:621.40px;top:872.00px;font-size:24.8px;line-height:24.8px;font-weight:normal;font-style:normal;color:#f1f2f4;letter-spacing:0.034px">Family name:</div>
<div class="t" style="left:621.40px;top:942.00px;font-size:24.8px;line-height:24.8px;font-weight:normal;font-style:normal;color:#f1f2f4;letter-spacing:0.278px">First name:</div>
<div class="t" style="left:1012.00px;top:516.00px;font-size:24.8px;line-height:24.8px;font-weight:normal;font-style:normal;color:#dcdde1;letter-spacing:0.209px">1034</div>
<div class="t" style="left:1012.00px;top:587.00px;font-size:24.8px;line-height:24.8px;font-weight:normal;font-style:normal;color:#dcdde1;letter-spacing:0.318px">1239Y38</div>
<div class="t" style="left:1012.00px;top:729.00px;font-size:24.8px;line-height:24.8px;font-weight:normal;font-style:normal;color:#dcdde1;letter-spacing:1.159px">67839369807</div>
<div class="t" style="left:1011.00px;top:799.00px;font-size:24.8px;line-height:24.8px;font-weight:normal;font-style:normal;color:#dcdde1;letter-spacing:0.348px">Male</div>
<div class="t" style="left:1011.00px;top:872.00px;font-size:24.8px;line-height:24.8px;font-weight:normal;font-style:normal;color:#dcdde1;letter-spacing:0.531px">Horvat</div>
<div class="t" style="left:1013.00px;top:942.00px;font-size:24.8px;line-height:24.8px;font-weight:normal;font-style:normal;color:#dcdde1;letter-spacing:-0.065px">Tomislav</div>
<div class="t" style="left:1011.20px;top:662.00px;font-size:19.4px;line-height:19.4px;font-weight:bold;font-style:normal;color:#256029;letter-spacing:0.806px">ACTIVE</div>
<div class="t" style="left:1792.60px;top:516.00px;font-size:24.8px;line-height:24.8px;font-weight:normal;font-style:normal;color:#f1f2f4;letter-spacing:0.406px">Passport #:</div>
<div class="t" style="left:1792.50px;top:587.00px;font-size:24.8px;line-height:24.8px;font-weight:normal;font-style:normal;color:#f1f2f4;letter-spacing:0.593px">Nationality:</div>
<div class="t" style="left:1792.50px;top:658.00px;font-size:24.8px;line-height:24.8px;font-weight:normal;font-style:normal;color:#f1f2f4;letter-spacing:0.640px">Date of birth:</div>
<div class="t" style="left:1792.90px;top:729.00px;font-size:24.8px;line-height:24.8px;font-weight:normal;font-style:normal;color:#f1f2f4;letter-spacing:0.699px">Country of birth:</div>
<div class="t" style="left:1792.40px;top:799.00px;font-size:24.8px;line-height:24.8px;font-weight:normal;font-style:normal;color:#f1f2f4;letter-spacing:0.548px">Place of birth:</div>
<div class="t" style="left:1792.40px;top:870.00px;font-size:24.8px;line-height:24.8px;font-weight:normal;font-style:normal;color:#f1f2f4;letter-spacing:0.247px">Father/Mother name:</div>
<div class="t" style="left:2183.00px;top:587.00px;font-size:24.8px;line-height:24.8px;font-weight:normal;font-style:normal;color:#dcdde1;letter-spacing:0.126px">Croatia</div>
<div class="t" style="left:2183.00px;top:658.00px;font-size:24.8px;line-height:24.8px;font-weight:normal;font-style:normal;color:#dcdde1;letter-spacing:-0.046px">10.04.1987</div>
<div class="t" style="left:2529.00px;top:658.00px;font-size:24.8px;line-height:24.8px;font-weight:normal;font-style:normal;color:#f1f2f4;letter-spacing:0.246px">35y 9m 15d</div>
<div class="t" style="left:2183.00px;top:729.00px;font-size:24.8px;line-height:24.8px;font-weight:normal;font-style:normal;color:#dcdde1;letter-spacing:0.126px">Croatia</div>
<div class="t" style="left:2183.00px;top:799.00px;font-size:24.8px;line-height:24.8px;font-weight:normal;font-style:normal;color:#dcdde1;letter-spacing:0.620px">Sinj</div>
<div class="t" style="left:234.50px;top:1151.00px;font-size:25px;line-height:25px;font-weight:bold;font-style:normal;color:#ffffff;letter-spacing:-0.452px">Choose image</div>
<div class="t" style="left:92.60px;top:1295.00px;font-size:25px;line-height:25px;font-weight:bold;font-style:normal;color:#ffffff;letter-spacing:-1.097px">Edit</div>
<div class="t" style="left:250.40px;top:1295.00px;font-size:25px;line-height:25px;font-weight:bold;font-style:normal;color:#ffffff;letter-spacing:-0.329px">Documents</div>
<div class="t" style="left:519.40px;top:1295.00px;font-size:25px;line-height:25px;font-weight:bold;font-style:normal;color:#ffffff;letter-spacing:-0.255px">Options</div>
<div class="t" style="left:55.00px;top:1389.00px;font-size:25px;line-height:25px;font-weight:bold;font-style:normal;color:#42b8f7;letter-spacing:0.131px">Active registrations</div>
<div class="t" style="left:340.00px;top:1389.00px;font-size:25px;line-height:25px;font-weight:bold;font-style:normal;color:#8594ab;letter-spacing:0.159px">Active contracts</div>
<div class="t" style="left:585.00px;top:1389.00px;font-size:25px;line-height:25px;font-weight:bold;font-style:normal;color:#8594ab;letter-spacing:0.392px">Contacts</div>
<div class="t" style="left:742.80px;top:1389.00px;font-size:25px;line-height:25px;font-weight:bold;font-style:normal;color:#8594ab;letter-spacing:-0.049px">Additional info</div>
<div class="t" style="left:964.80px;top:1389.00px;font-size:25px;line-height:25px;font-weight:bold;font-style:normal;color:#8594ab;letter-spacing:0.495px">History</div>
<div class="t" style="left:1102.00px;top:1389.00px;font-size:25px;line-height:25px;font-weight:bold;font-style:normal;color:#8594ab;letter-spacing:0.645px">Matches</div>
<div class="t" style="left:1254.00px;top:1389.00px;font-size:25px;line-height:25px;font-weight:bold;font-style:normal;color:#8594ab;letter-spacing:0.017px">Sanctions</div>
<div class="b" style="left:22px;top:308px;width:502px;height:112px;border:10px solid #3a94f2;filter:drop-shadow(0 3px 4px rgba(0,0,0,.95))"></div>
<div class="b" style="left:602px;top:626px;width:652px;height:80px;border:10px solid #3a94f2;filter:drop-shadow(0 3px 4px rgba(0,0,0,.95))"></div>
<div class="b" style="left:30px;top:1352px;width:1480px;height:90px;border:10px solid #3a94f2;filter:drop-shadow(0 3px 4px rgba(0,0,0,.95))"></div>
</body></html>
